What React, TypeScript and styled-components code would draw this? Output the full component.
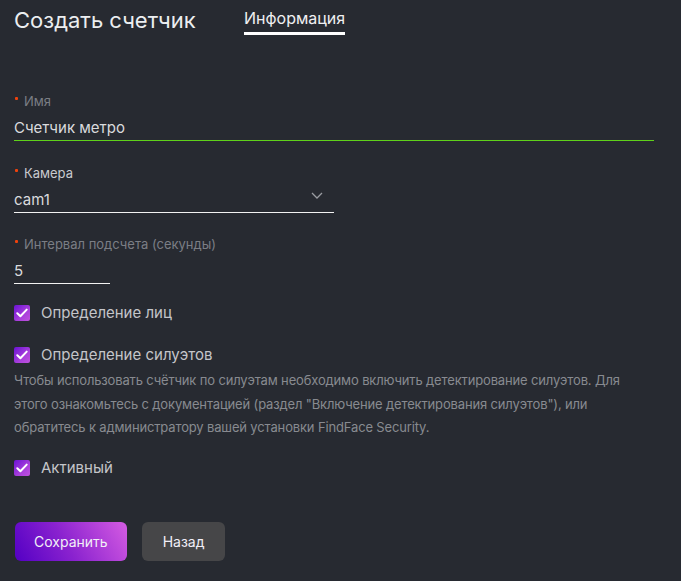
import React from "react";
import styled, { createGlobalStyle } from "styled-components";

const Global = createGlobalStyle`
  html, body { margin: 0; padding: 0; background: #272a31; }
  body { font-family: Inter, "Noto Sans", sans-serif; color: #e4e5e7; }
  * { box-sizing: border-box; }
`;

const Page = styled.div`
  width: 681px;
  height: 581px;
  background: #272a31;
  padding: 0 14px;
  display: flex;
  flex-direction: column;
`;

const Header = styled.div`
  display: flex;
  align-items: flex-start;
  height: 35px;
  padding-top: 6px;
`;

const Title = styled.h1`
  margin: 0;
  font-size: 22px;
  font-weight: 400;
  line-height: 28px;
  color: #eceef0;
  width: 230px;
`;

const Tab = styled.div`
  margin-top: 1px;
  font-size: 16px;
  line-height: 22px;
  color: #f0f0f2;
  padding-bottom: 3px;
  border-bottom: 3px solid #ffffff;
`;

const Form = styled.div`
  display: flex;
  flex-direction: column;
  padding-top: 58px;
`;

const Field = styled.div<{ $width: number; $mb: number }>`
  width: ${(p) => p.$width}px;
  margin-bottom: ${(p) => p.$mb}px;
  display: flex;
  flex-direction: column;
`;

const Label = styled.div`
  font-size: 13px;
  line-height: 16px;
  color: #7b7e85;
  display: flex;
  align-items: center;
  gap: 6px;
  white-space: nowrap;
`;

const LabelDark = styled(Label)`
  color: #c9cbcf;
`;

const Req = styled.span`
  flex: none;
  width: 3px;
  height: 3px;
  border-radius: 1px;
  background: #f0420c;
  margin-left: 1px;
  margin-top: -5px;
`;

const Input = styled.div<{ $line: string }>`
  margin-top: 9px;
  height: 23px;
  font-size: 15px;
  line-height: 20px;
  color: #dadbde;
  border-bottom: 1px solid ${(p) => p.$line};
  display: flex;
  align-items: flex-start;
  justify-content: space-between;
`;

const Chevron = styled.svg`
  margin-right: 11px;
  margin-top: 2px;
`;

const CheckRow = styled.label<{ $mb: number }>`
  display: flex;
  align-items: center;
  gap: 11px;
  font-size: 15px;
  line-height: 20px;
  color: #c4c5c9;
  margin-bottom: ${(p) => p.$mb}px;
`;

const Box = styled.span`
  width: 16px;
  height: 16px;
  border-radius: 2px;
  background: linear-gradient(135deg, #6a12d4 0%, #a83fdc 60%, #c052dd 100%);
  display: flex;
  align-items: center;
  justify-content: center;
`;

const Help = styled.p`
  margin: 4px 0 18px 0;
  font-size: 13px;
  line-height: 23.5px;
  color: #888a90;
  width: 640px;
  letter-spacing: -0.15px;
`;

const Buttons = styled.div`
  display: flex;
  gap: 15px;
  margin-top: 44px;
  padding-left: 1px;
`;

const Button = styled.button<{ $primary?: boolean }>`
  height: 39px;
  padding: 0 ${(p) => (p.$primary ? 19 : 21)}px;
  border: none;
  border-radius: 6px;
  font-family: Inter, "Noto Sans", sans-serif;
  font-size: 14px;
  color: #f1eef7;
  background: ${(p) =>
    p.$primary
      ? "linear-gradient(60deg, #5300c4 0%, #8a22cf 45%, #d55ce2 100%)"
      : "#464648"};
`;

const Check = () => (
  <Box>
    <svg width="12" height="10" viewBox="0 0 12 10">
      <path d="M1.3 5.2 L4.4 8.2 L10.7 1.6" fill="none" stroke="#fff" strokeWidth="2" strokeLinecap="round" strokeLinejoin="round" />
    </svg>
  </Box>
);

export default function App() {
  return (
    <Page>
      <Global />
      <Header>
        <Title>Создать счетчик</Title>
        <Tab>Информация</Tab>
      </Header>
      <Form>
        <Field $width={640} $mb={24}>
          <Label><Req />Имя</Label>
          <Input $line="#5fd11a">Счетчик метро</Input>
        </Field>
        <Field $width={320} $mb={23}>
          <LabelDark><Req />Камера</LabelDark>
          <Input $line="#f2f2f2">
            cam1
            <Chevron width="12" height="7" viewBox="0 0 12 7">
              <path d="M1 1 L6 6 L11 1" fill="none" stroke="#9a9ca1" strokeWidth="1.3" />
            </Chevron>
          </Input>
        </Field>
        <Field $width={96} $mb={19}>
          <Label><Req />Интервал подсчета (секунды)</Label>
          <Input $line="#f2f2f2">5</Input>
        </Field>
        <CheckRow $mb={22}><Check />Определение лиц</CheckRow>
        <CheckRow $mb={0}><Check />Определение силуэтов</CheckRow>
        <Help>
          Чтобы использовать счётчик по силуэтам необходимо включить детектирование силуэтов. Для
          этого ознакомьтесь с документацией (раздел "Включение детектирования силуэтов"), или
          обратитесь к администратору вашей установки FindFace Security.
        </Help>
        <CheckRow $mb={0}><Check />Активный</CheckRow>
        <Buttons>
          <Button $primary>Сохранить</Button>
          <Button>Назад</Button>
        </Buttons>
      </Form>
    </Page>
  );
}
